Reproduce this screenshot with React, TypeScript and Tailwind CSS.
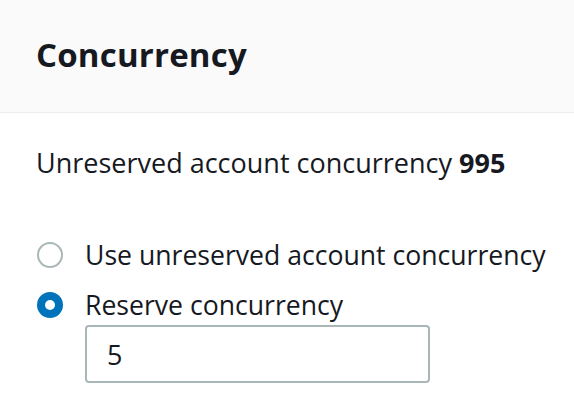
import { useState } from "react";

const RadioOption = ({
  label,
  checked,
  onSelect,
}: {
  label: string;
  checked: boolean;
  onSelect: () => void;
}) => {
  return (
    <label className="flex items-center gap-[22px] cursor-pointer" onClick={onSelect}>
      {checked ? (
        <span className="shrink-0 w-[26px] h-[26px] rounded-full bg-[#0073bb] flex items-center justify-center">
          <span className="w-[10px] h-[10px] rounded-full bg-white" />
        </span>
      ) : (
        <span className="shrink-0 w-[26px] h-[26px] rounded-full border-2 border-[#aab7b8] bg-white" />
      )}
      <span className="whitespace-nowrap text-[26.6px] leading-[36px] text-[#16191f]">{label}</span>
    </label>
  );
};

const App = () => {
  const [mode, setMode] = useState("reserve");
  const [value, setValue] = useState("5");

  return (
    <div className="w-[574px] h-[414px] bg-white font-['Open_Sans',sans-serif] text-[#16191f] overflow-hidden">
      <div className="h-[113px] bg-[#fafafa] border-b border-[#eaeded] flex items-center px-[36px]">
        <h2 className="text-[33px] font-bold -mt-[2px] tracking-[0.2px]">Concurrency</h2>
      </div>
      <div className="px-[37px] pt-[32px]">
        <p className="text-[27px] leading-[36px] -ml-[1px]">
          Unreserved account concurrency <span className="font-bold">995</span>
        </p>
        <div className="mt-[56px] flex flex-col gap-[14px]">
          <RadioOption
            label="Use unreserved account concurrency"
            checked={mode === "unreserved"}
            onSelect={() => setMode("unreserved")}
          />
          <RadioOption
            label="Reserve concurrency"
            checked={mode === "reserve"}
            onSelect={() => setMode("reserve")}
          />
        </div>
        <div className="pl-[48px] mt-[2px]">
          <input
            className="w-[345px] h-[58px] border-2 border-[#aab7b8] rounded-[4px] px-[20px] text-[27px] text-[#16191f] outline-none"
            value={value}
            onChange={(e) => setValue(e.target.value)}
          />
        </div>
      </div>
    </div>
  );
};

export default App;
